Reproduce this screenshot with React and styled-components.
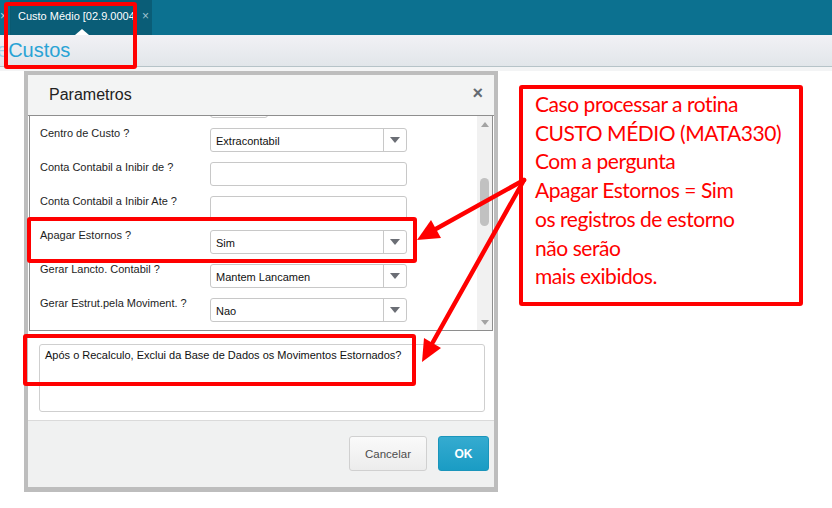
import React from 'react'
import styled, { createGlobalStyle } from 'styled-components'

const GlobalStyle = createGlobalStyle`
  html, body {
    margin: 0;
    padding: 0;
    background: #fff;
  }
  body {
    font-family: "Liberation Sans", Arial, sans-serif;
  }
`

const Page = styled.div`
  position: relative;
  width: 832px;
  height: 508px;
  overflow: hidden;
  background: #fff;
`

const TopBar = styled.div`
  display: flex;
  height: 35px;
  background: #0c7190;
`

const TabStub = styled.div`
  width: 11px;
  overflow: hidden;
  display: flex;
  align-items: center;
  color: #b8d4de;
  font-size: 12px;
  padding-bottom: 4px;
  box-sizing: border-box;
  border-right: 1px solid #0a5a72;
`

const Tab = styled.div`
  position: relative;
  width: 141px;
  display: flex;
  align-items: center;
  padding-left: 7px;
  box-sizing: border-box;
  background: #0a5d77;
  color: #fff;
  font-size: 11px;

  &::after {
    content: '';
    position: absolute;
    left: 64px;
    bottom: 0;
    border-left: 7px solid transparent;
    border-right: 7px solid transparent;
    border-bottom: 6px solid #fff;
  }
`

const TabTitle = styled.span`
  width: 118px;
  overflow: hidden;
  white-space: nowrap;
  padding-bottom: 4px;
  border-right: 1px solid #cfe3ea;
`

const TabClose = styled.span`
  margin-left: 5px;
  padding-bottom: 4px;
  color: #9ec3d0;
  font-size: 12px;
`

const SubHeader = styled.div`
  height: 31px;
  display: flex;
  align-items: center;
  overflow: hidden;
  background: linear-gradient(#f1f1f5, #e2e6ea);
  border-bottom: 1px solid #b6c3c8;
`

const Crumb = styled.span`
  margin-left: -3px;
  font-size: 20px;
  color: #9fd2e6;
`

const Title = styled.span`
  font-size: 20px;
  color: #29a3d5;
`

const Strip = styled.div`
  height: 4px;
  background: #f3f4f5;
`

const Content = styled.div`
  padding-left: 24px;
`

const Dialog = styled.div`
  width: 474px;
  height: 421px;
  box-sizing: border-box;
  border: 4px solid #bdbdbd;
  border-bottom-width: 5px;
  background: #fff;
  display: flex;
  flex-direction: column;
`

const DialogHeader = styled.div`
  height: 40px;
  flex: none;
  display: flex;
  align-items: center;
  justify-content: space-between;
  padding: 0 11px 0 21px;
  background: #f3f4f4;
  border-bottom: 1px solid #8e8e8e;
`

const DialogTitle = styled.span`
  font-size: 16px;
  color: #222;
  padding-bottom: 1px;
`

const CloseX = styled.span`
  font-size: 18px;
  font-weight: bold;
  color: #646a72;
  padding-bottom: 4px;
`

const ScrollPanel = styled.div`
  height: 214px;
  flex: none;
  margin: 0 1px;
  display: flex;
  overflow: hidden;
  border-left: 1px solid #8e8e8e;
  border-right: 1px solid #8e8e8e;
  border-bottom: 1px solid #8e8e8e;
`

const RowList = styled.div`
  flex: 1;
  margin-top: -25px;
  padding-left: 10px;
`

const Row = styled.div`
  display: flex;
  align-items: flex-start;
  height: 34px;
`

const Label = styled.div`
  width: 170px;
  font-size: 11px;
  line-height: 14px;
  padding-top: 1px;
  color: #1e1e1e;
`

const Field = styled.div`
  margin-top: 3px;
  width: ${p => p.$w || 197}px;
  height: 24px;
  box-sizing: border-box;
  border: 1px solid #c8c8c8;
  border-radius: 3px;
  background: #fff;
  display: flex;
  font-size: 11px;
  color: #111;
`

const FieldText = styled.div`
  flex: 1;
  display: flex;
  align-items: center;
  padding-left: 5px;
  padding-top: 2px;
`

const Caret = styled.div`
  width: 22px;
  border-left: 1px solid #c8c8c8;
  display: flex;
  align-items: center;
  justify-content: center;

  &::before {
    content: '';
    border-left: 5px solid transparent;
    border-right: 5px solid transparent;
    border-top: 6px solid #6b6e75;
  }
`

const ScrollBar = styled.div`
  width: 15px;
  background: #f1f1f1;
  display: flex;
  flex-direction: column;
  align-items: center;
`

const ScrollArrow = styled.div`
  margin-top: ${p => (p.$down ? 'auto' : '6px')};
  margin-bottom: ${p => (p.$down ? '5px' : '0')};
  border-left: 4px solid transparent;
  border-right: 4px solid transparent;
  ${p => (p.$down ? 'border-top: 5px solid #a3a3a3;' : 'border-bottom: 5px solid #a3a3a3;')}
`

const Thumb = styled.div`
  margin-top: 51px;
  width: 9px;
  height: 48px;
  border-radius: 5px;
  background: #c1c1c1;
`

const HelpArea = styled.div`
  height: 89px;
  flex: none;
  box-sizing: border-box;
  padding: 13px 9px 0 11px;
`

const HelpBox = styled.div`
  height: 68px;
  box-sizing: border-box;
  border: 1px solid #cfcfcf;
  border-radius: 3px;
  padding: 3px 5px;
  font-size: 11px;
  line-height: 14px;
  color: #111;
`

const Footer = styled.div`
  flex: 1;
  display: flex;
  justify-content: flex-end;
  align-items: flex-start;
  gap: 11px;
  padding: 15px 5px 0 0;
  background: #f0f1f1;
  border-top: 1px solid #dadada;
`

const Button = styled.div`
  height: 35px;
  box-sizing: border-box;
  display: flex;
  align-items: center;
  justify-content: center;
  border-radius: 3px;
  font-size: ${p => (p.$primary ? 12 : 11.5)}px;
  width: ${p => (p.$primary ? 51 : 78)}px;
  border: 1px solid ${p => (p.$primary ? '#1a95bb' : '#d0d0d0')};
  background: ${p => (p.$primary ? 'linear-gradient(#35abd0, #1a9cc4)' : 'linear-gradient(#fafafa, #ececec)')};
  color: ${p => (p.$primary ? '#fff' : '#4d4d4d')};
  font-weight: ${p => (p.$primary ? 'bold' : 'normal')};
`

const Mark = styled.div`
  position: absolute;
  box-sizing: border-box;
  border: 4px solid #ff0000;
  border-radius: 3px;
`

const Note = styled(Mark)`
  padding: 1px 0 0 12px;
  font-family: Lato, "Open Sans", sans-serif;
  font-size: 21px;
  letter-spacing: -0.45px;
  line-height: 28.7px;
  color: #ff0000;
  white-space: pre;
`

const Arrows = styled.svg`
  position: absolute;
  left: 0;
  top: 0;
  pointer-events: none;
`

const rows = [
  { label: '', value: null, w: 58 },
  { label: 'Centro de Custo ?', value: 'Extracontabil', select: true },
  { label: 'Conta Contabil a Inibir de ?', value: '' },
  { label: 'Conta Contabil a Inibir Ate ?', value: '' },
  { label: 'Apagar Estornos ?', value: 'Sim', select: true },
  { label: 'Gerar Lancto. Contabil ?', value: 'Mantem Lancamen', select: true },
  { label: 'Gerar Estrut.pela Moviment. ?', value: 'Nao', select: true },
  { label: 'Atualiza Custo ?', value: 'Sim', select: true },
]

const noteText = `Caso processar a rotina
CUSTO MÉDIO (MATA330)
Com a pergunta
Apagar Estornos = Sim
os registros de estorno
não serão
mais exibidos.`

export default function App() {
  return (
    <Page>
      <GlobalStyle />
      <TopBar>
        <TabStub>×</TabStub>
        <Tab>
          <TabTitle>Custo Médio [02.9.0004]</TabTitle>
          <TabClose>×</TabClose>
        </Tab>
      </TopBar>
      <SubHeader>
        <Crumb>e</Crumb>
        <Title>Custos</Title>
      </SubHeader>
      <Strip />

      <Content>
        <Dialog>
          <DialogHeader>
            <DialogTitle>Parametros</DialogTitle>
            <CloseX>×</CloseX>
          </DialogHeader>

          <ScrollPanel>
            <RowList>
              {rows.map((r, i) => (
                <Row key={i}>
                  <Label>{r.label}</Label>
                  <Field $w={r.w}>
                    <FieldText>{r.value}</FieldText>
                    {r.select && <Caret />}
                  </Field>
                </Row>
              ))}
            </RowList>
            <ScrollBar>
              <ScrollArrow />
              <Thumb />
              <ScrollArrow $down />
            </ScrollBar>
          </ScrollPanel>

          <HelpArea>
            <HelpBox>Após o Recalculo, Exclui da Base de Dados os Movimentos Estornados?</HelpBox>
          </HelpArea>

          <Footer>
            <Button>Cancelar</Button>
            <Button $primary>OK</Button>
          </Footer>
        </Dialog>
      </Content>

      {/* annotations drawn over the screenshot */}
      <Mark style={{ left: 4, top: 2, width: 133, height: 67 }} />
      <Mark style={{ left: 27, top: 217, width: 390, height: 46 }} />
      <Mark style={{ left: 23, top: 334, width: 393, height: 52 }} />
      <Note style={{ left: 519, top: 85, width: 284, height: 221 }}>{noteText}</Note>

      <Arrows width="832" height="508">
        <line x1="524" y1="180" x2="434" y2="230" stroke="#ff0000" strokeWidth="4.5" strokeLinecap="round" />
        <polygon points="417,240 441,238 431,220" fill="#ff0000" />
        <line x1="524" y1="180" x2="433" y2="342" stroke="#ff0000" strokeWidth="4.5" strokeLinecap="round" />
        <polygon points="422,362 441,348 424,338" fill="#ff0000" />
      </Arrows>
    </Page>
  )
}
